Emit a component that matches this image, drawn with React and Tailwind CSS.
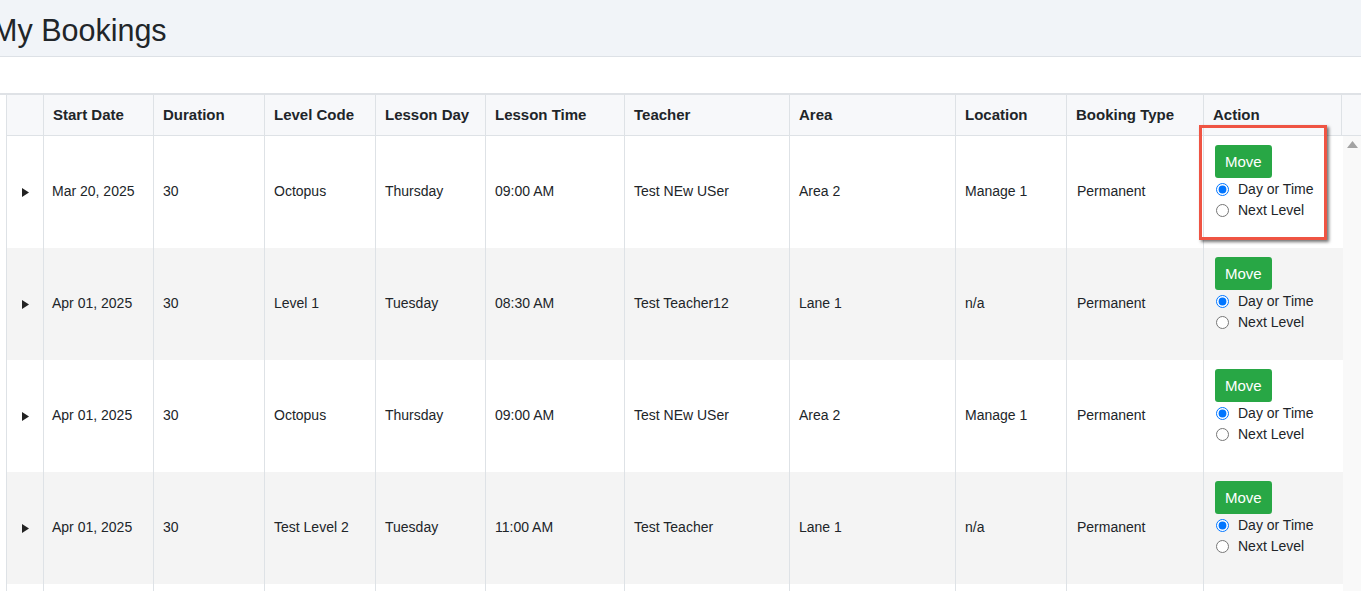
import { useState } from "react";

const columns = [
  { key: "start", label: "Start Date", w: "w-[110px]", pad: "pl-[8px]" },
  { key: "duration", label: "Duration", w: "w-[111px]", pad: "pl-[9px]" },
  { key: "level", label: "Level Code", w: "w-[111px]", pad: "pl-[9px]" },
  { key: "day", label: "Lesson Day", w: "w-[110px]", pad: "pl-[9px]" },
  { key: "time", label: "Lesson Time", w: "w-[139px]", pad: "pl-[9px]" },
  { key: "teacher", label: "Teacher", w: "w-[165px]", pad: "pl-[9px]" },
  { key: "area", label: "Area", w: "w-[166px]", pad: "pl-[9px]" },
  { key: "location", label: "Location", w: "w-[111px]", pad: "pl-[9px]" },
  { key: "type", label: "Booking Type", w: "w-[137px]", pad: "pl-[10px]" },
];

const bookings = [
  { start: "Mar 20, 2025", duration: "30", level: "Octopus", day: "Thursday", time: "09:00 AM", teacher: "Test NEw USer", area: "Area 2", location: "Manage 1", type: "Permanent" },
  { start: "Apr 01, 2025", duration: "30", level: "Level 1", day: "Tuesday", time: "08:30 AM", teacher: "Test Teacher12", area: "Lane 1", location: "n/a", type: "Permanent" },
  { start: "Apr 01, 2025", duration: "30", level: "Octopus", day: "Thursday", time: "09:00 AM", teacher: "Test NEw USer", area: "Area 2", location: "Manage 1", type: "Permanent" },
  { start: "Apr 01, 2025", duration: "30", level: "Test Level 2", day: "Tuesday", time: "11:00 AM", teacher: "Test Teacher", area: "Lane 1", location: "n/a", type: "Permanent" },
];

const ActionCell = ({ idx }) => {
  const [choice, setChoice] = useState("day");
  return (
    <div className="w-[138px] shrink-0 pl-[11px] pt-[9px] border-l border-[#dee2e6]">
      <button className="h-[33px] px-[10px] bg-[#28a745] text-white text-[15px] rounded-[3px] leading-none">
        Move
      </button>
      <label className="flex items-center h-[21px] mt-[1px] text-[14px]">
        <input
          type="radio"
          name={`move-${idx}`}
          checked={choice === "day"}
          onChange={() => setChoice("day")}
          className="m-0 ml-[1px] w-[13px] h-[13px] mr-[9px]"
        />
        Day or Time
      </label>
      <label className="flex items-center h-[21px] text-[14px]">
        <input
          type="radio"
          name={`move-${idx}`}
          checked={choice === "next"}
          onChange={() => setChoice("next")}
          className="m-0 ml-[1px] w-[13px] h-[13px] mr-[9px]"
        />
        Next Level
      </label>
    </div>
  );
};

const App = () => {
  return (
    <main className="w-[1361px] h-[591px] overflow-hidden bg-white text-[#212529] font-['Liberation_Sans',Arial,sans-serif]">
      {/* page title band */}
      <div className="h-[57px] bg-[#f1f4f8] border-b border-[#dde1e6] flex items-center">
        <h1 className="ml-[-8px] mt-[4px] text-[30.5px] leading-none font-normal whitespace-nowrap">My Bookings</h1>
      </div>

      <div className="h-[36px]" />

      {/* table */}
      <div className="relative border-t-2 border-[#dfe2e6]">
        {/* header */}
        <div className="ml-[6px] flex h-[41px] bg-[#f7f8fa] border-b border-[#dee2e6] border-l border-l-[#dee2e6]">
          <div className="w-[36px] shrink-0" />
          {columns.map((c) => (
            <div key={c.key} className={`${c.w} shrink-0 border-l border-[#dee2e6] pl-[9px] flex items-center text-[15px] font-bold`}>
              {c.label}
            </div>
          ))}
          <div className="w-[138px] shrink-0 border-l border-[#dee2e6] pl-[9px] flex items-center text-[15px] font-bold">
            Action
          </div>
          <div className="flex-1 border-l border-[#dee2e6]" />
        </div>

        {/* body with scrollbar */}
        <div className="ml-[6px] flex">
          <div className="w-[1337px] shrink-0 border-l border-[#dee2e6]">
            {bookings.map((b, i) => (
              <div key={i} className={`flex h-[112px] ${i % 2 === 1 ? "bg-[#f4f4f4]" : "bg-white"}`}>
                <div className="w-[36px] shrink-0 flex items-center justify-center pl-[1px]">
                  <svg width="7" height="9" viewBox="0 0 7 9">
                    <path d="M0 0 L7 4.5 L0 9 Z" fill="#222" />
                  </svg>
                </div>
                {columns.map((c) => (
                  <div key={c.key} className={`${c.w} ${c.pad} shrink-0 border-l border-[#dee2e6] flex items-center text-[14px] pb-[1px]`}>
                    {b[c.key]}
                  </div>
                ))}
                <ActionCell idx={i} />
              </div>
            ))}
            <div className="h-[20px] flex">
              <div className="w-[36px] shrink-0" />
              {columns.map((c) => (
                <div key={c.key} className={`${c.w} shrink-0 border-l border-[#dee2e6]`} />
              ))}
              <div className="w-[138px] shrink-0 border-l border-[#dee2e6]" />
            </div>
          </div>
          {/* scrollbar track */}
          <div className="flex-1 bg-[#f9f9f9] flex justify-center pt-[5px]">
            <svg width="11" height="7" viewBox="0 0 11 7">
              <path d="M5.5 0 L11 7 L0 7 Z" fill="#a3a3a3" />
            </svg>
          </div>
        </div>

        {/* highlight annotation */}
        <div className="absolute left-[1199px] top-[30px] w-[128px] h-[115px] border-[3px] border-[#ef5443] shadow-[2px_2px_3px_rgba(0,0,0,0.55)] pointer-events-none" />
      </div>
    </main>
  );
};

export default App;
